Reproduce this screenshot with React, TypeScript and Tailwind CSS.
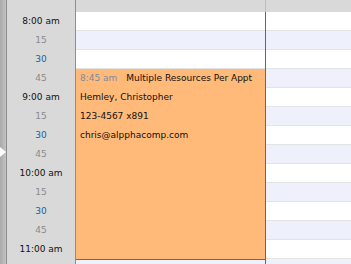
import React from "react";

const times: { label: string; kind: "hour" | "q" | "half" }[] = [
  { label: "8:00 am", kind: "hour" },
  { label: "15", kind: "q" },
  { label: "30", kind: "half" },
  { label: "45", kind: "q" },
  { label: "9:00 am", kind: "hour" },
  { label: "15", kind: "q" },
  { label: "30", kind: "half" },
  { label: "45", kind: "q" },
  { label: "10:00 am", kind: "hour" },
  { label: "15", kind: "q" },
  { label: "30", kind: "half" },
  { label: "45", kind: "q" },
  { label: "11:00 am", kind: "hour" },
];

function Row({ i }: { i: number }) {
  return (
    <div
      className={
        "h-[19px] shrink-0 border-b border-[#e3e3e3] " +
        (i % 2 === 0 ? "bg-white" : "bg-[#eef1fb]")
      }
    />
  );
}

export default function App() {
  const font = { fontFamily: '"DejaVu Sans", Verdana, sans-serif' };
  return (
    <div
      className="w-[351px] h-[264px] overflow-hidden flex bg-white text-[9px] text-[#111]"
      style={font}
    >
      {/* left strip */}
      <div className="relative w-[6px] shrink-0 bg-gradient-to-r from-[#a9a9a9] to-[#c4c4c4]">
        <div className="absolute left-0 top-[147px] w-0 h-0 border-y-[5px] border-y-transparent border-l-[6px] border-l-white" />
      </div>
      <div className="w-px shrink-0 bg-[#8c8c8c]" />
      {/* time column */}
      <div className="w-[68px] shrink-0 bg-[#d9d9d9] flex flex-col">
        <div className="h-[12px] shrink-0" />
        {times.map((t, i) => (
          <div
            key={i}
            className={
              "h-[19px] shrink-0 flex items-center justify-center " +
              (t.kind === "hour"
                ? "text-[#111]"
                : t.kind === "half"
                ? "text-[#2061a8]"
                : "text-[#8a8a8a]")
            }
          >
            {t.label}
          </div>
        ))}
      </div>
      <div className="w-px shrink-0 bg-[#8e8e8e]" />
      {/* column 1 */}
      <div className="w-[189px] shrink-0 flex flex-col">
        <div className="h-[12px] shrink-0 bg-[#d9d9d9]" />
        <Row i={0} />
        <Row i={1} />
        <Row i={2} />
        <div className="h-[191px] shrink-0 bg-[#ffb978] border-b border-[#6a6a6a] flex flex-col px-[4px]">
          <div className="h-[19px] flex items-center">
            <span className="text-[#7d8aa3]">8:45 am</span>
            <span className="ml-[9px]">Multiple Resources Per Appt</span>
          </div>
          <div className="h-[19px] flex items-center">Hemley, Christopher</div>
          <div className="h-[19px] flex items-center">123-4567 x891</div>
          <div className="h-[19px] flex items-center">chris@alpphacomp.com</div>
        </div>
        <Row i={13} />
      </div>
      <div className="w-px shrink-0 flex flex-col">
        <div className="h-[12px] shrink-0 bg-[#bdbdbd]" />
        <div className="flex-1 bg-[#666]" />
      </div>
      {/* column 2 */}
      <div className="flex-1 flex flex-col">
        <div className="h-[12px] shrink-0 bg-[#d9d9d9]" />
        {[...times, null].map((_, i) => (
          <Row key={i} i={i} />
        ))}
      </div>
    </div>
  );
}
